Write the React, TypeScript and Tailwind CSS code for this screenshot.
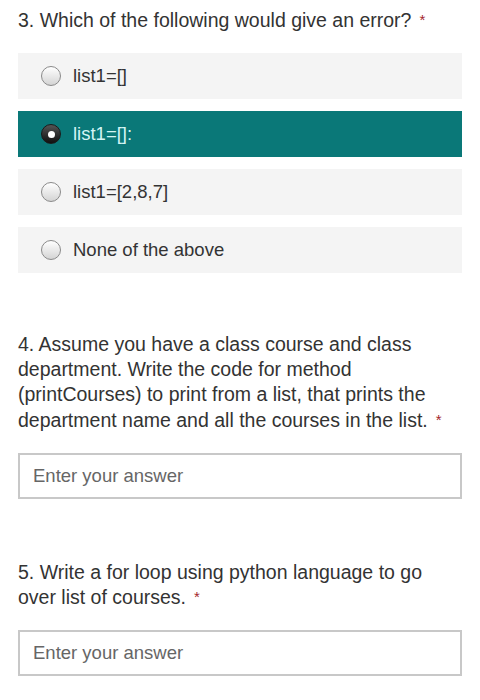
import React from "react";

const font = { fontFamily: '"Liberation Sans", Arial, sans-serif' };

function Radio({ checked }: { checked: boolean }) {
  if (checked) {
    return (
      <span className="flex h-[20px] w-[20px] shrink-0 items-center justify-center rounded-full border border-[#1a1a1a] bg-gradient-to-b from-[#555] to-[#111]">
        <span className="h-[7px] w-[7px] rounded-full bg-white" />
      </span>
    );
  }
  return (
    <span className="h-[20px] w-[20px] shrink-0 rounded-full border border-[#8a8a8a] bg-gradient-to-b from-white to-[#d4d4d4]" />
  );
}

const options = ["list1=[]", "list1=[]:", "list1=[2,8,7]", "None of the above"];

function Star() {
  return (
    <span className="ml-[8px] mt-[4px] inline-block align-top text-[15px] leading-none text-[#a4262c]">*</span>
  );
}

export default function App() {
  const selected = 1;
  return (
    <div className="min-h-[700px] w-full bg-white px-[18px] pt-[8px] text-[#333]" style={font}>
      <div className="text-[19.5px] leading-[25px]">
        3. Which of the following would give an error?
        <Star />
      </div>

      <div className="mt-[20px] flex flex-col gap-[12px]">
        {options.map((o, i) => (
          <div
            key={o}
            className={`flex h-[46px] items-center gap-[12px] pl-[23px] text-[18.5px] ${
              i === selected ? "bg-[#0a7878] text-[#d4f5f5]" : "bg-[#f4f4f4] text-[#333]"
            }`}
          >
            <Radio checked={i === selected} />
            <span>{o}</span>
          </div>
        ))}
      </div>

      <div className="mt-[59px] text-[19.5px] leading-[25.2px]">
        4. Assume you have a class course and class department. Write the code for method
        (printCourses) to print from a list, that prints the department name and all the courses in
        the list.
        <Star />
      </div>
      <div className="mt-[20px] flex h-[46px] items-center border-2 border-[#c8c8c8] pl-[13px] text-[18.5px] text-[#666]">
        Enter your answer
      </div>

      <div className="mt-[61px] text-[19.5px] leading-[25.2px]">
        5. Write a for loop using python language to go over list of courses.
        <Star />
      </div>
      <div className="mt-[20px] flex h-[46px] items-center border-2 border-[#c8c8c8] pl-[13px] text-[18.5px] text-[#666]">
        Enter your answer
      </div>
    </div>
  );
}
